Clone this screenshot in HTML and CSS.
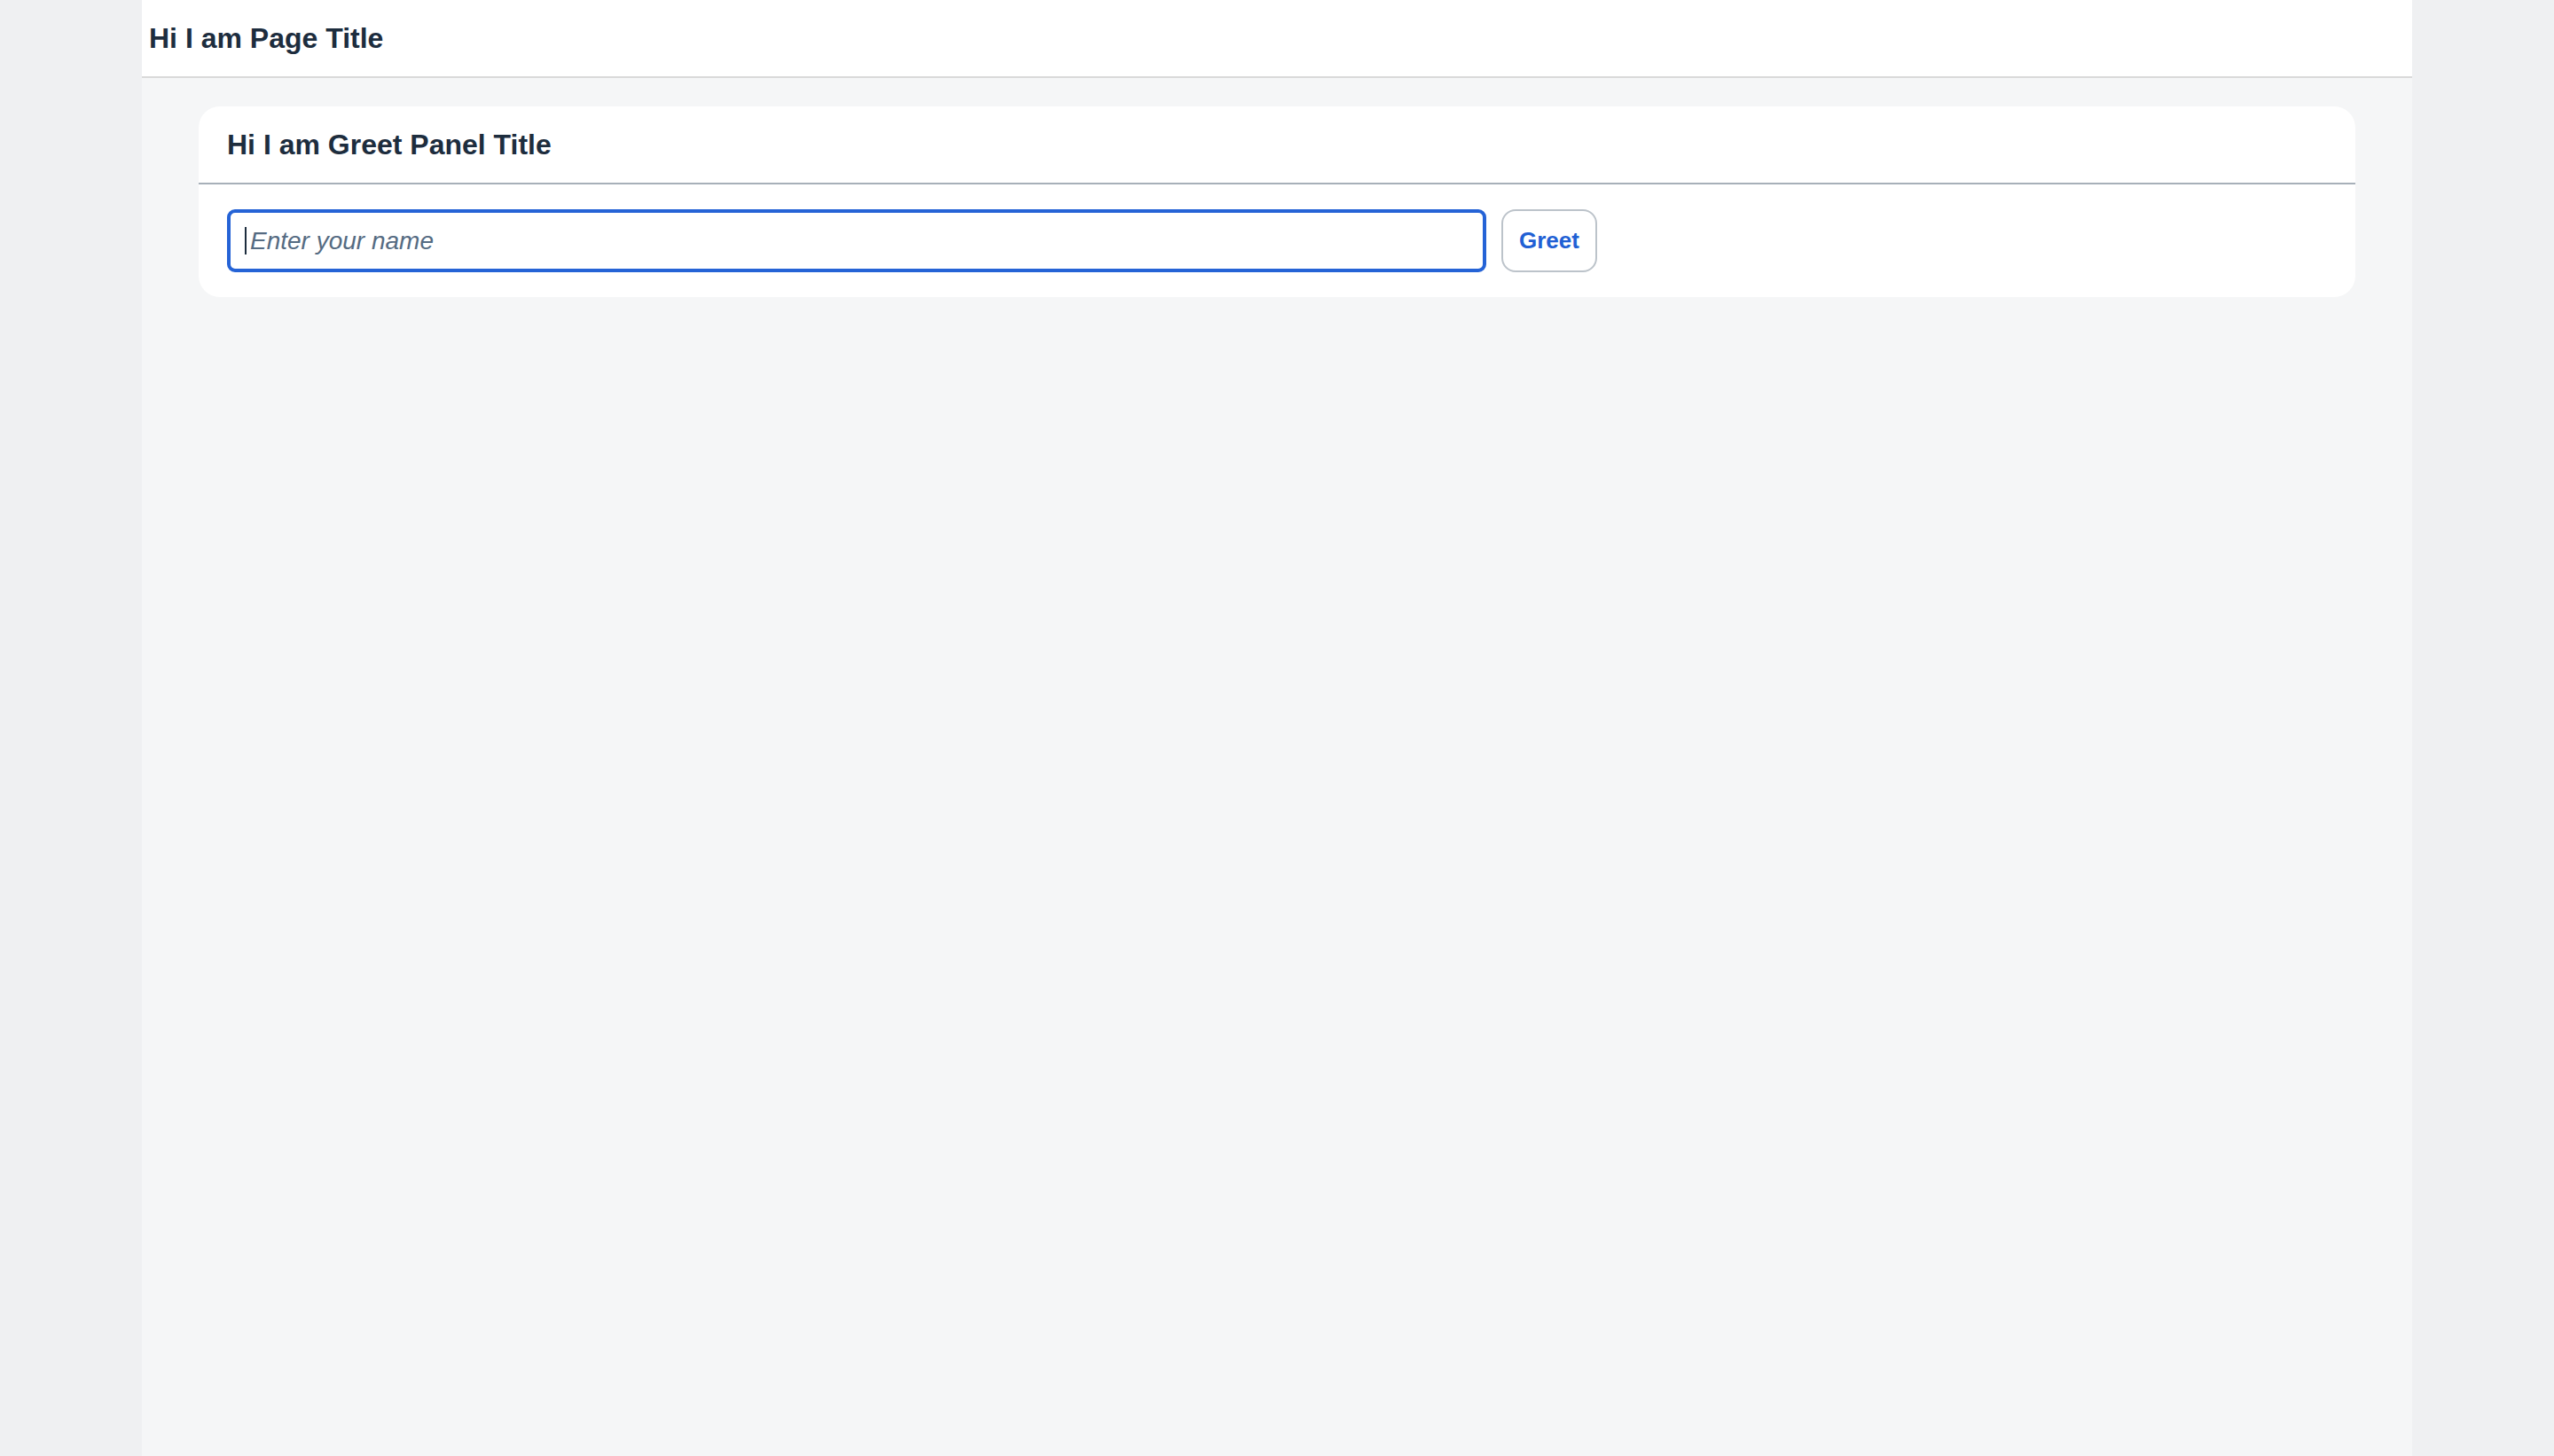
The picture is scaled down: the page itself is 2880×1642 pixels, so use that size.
FILE: index.html
```html
<!DOCTYPE html>
<html lang="en">
<head>
<meta charset="utf-8">
<title>Greet</title>
<link rel="stylesheet" href="styles.css">
</head>
<body>
<div class="shell">
  <header class="page-header">
    <h1 class="page-title">Hi I am Page Title</h1>
  </header>
  <main class="content">
    <section class="panel">
      <div class="panel-header">
        <h2 class="panel-title">Hi I am Greet Panel Title</h2>
      </div>
      <div class="panel-body">
        <div class="field" role="textbox" aria-label="Enter your name">
          <span class="caret"></span><span class="placeholder">Enter your name</span>
        </div>
        <button class="btn" type="button">Greet</button>
      </div>
    </section>
  </main>
</div>
</body>
</html>
```
FILE: styles.css
```css
html, body {
  margin: 0;
  padding: 0;
}
body {
  background: #eff0f2;
  font-family: "Liberation Sans", Arial, sans-serif;
  color: #1d2d3e;
}
.shell {
  width: 2560px;
  margin: 0 auto;
  min-height: 100vh;
  background: #f5f6f7;
}
.page-header {
  height: 86px;
  background: #ffffff;
  border-bottom: 2px solid #d9d9d9;
  display: flex;
  align-items: center;
  padding-left: 8px;
}
.page-title {
  margin: 0;
  font-size: 32px;
  font-weight: 700;
}
.content {
  padding: 32px 64px;
}
.panel {
  background: #ffffff;
  border-radius: 24px;
}
.panel-header {
  height: 86px;
  border-bottom: 2px solid #a7b0b9;
  display: flex;
  align-items: center;
  padding: 0 32px;
}
.panel-title {
  margin: 0;
  font-size: 32px;
  font-weight: 700;
}
.panel-body {
  display: flex;
  gap: 17px;
  padding: 28px 32px;
}
.field {
  box-sizing: border-box;
  width: 1420px;
  height: 71px;
  border: 4px solid #2563d6;
  border-radius: 9px;
  display: flex;
  align-items: center;
  padding-left: 16px;
  background: #ffffff;
}
.caret {
  width: 2px;
  height: 31px;
  background: #1d2d3e;
}
.placeholder {
  margin-left: 4px;
  font-size: 28px;
  font-style: italic;
  color: #556b82;
}
.btn {
  box-sizing: border-box;
  width: 108px;
  height: 71px;
  border: 2px solid #bcc3ca;
  border-radius: 16px;
  background: #ffffff;
  color: #2160d4;
  font-family: "Liberation Sans", Arial, sans-serif;
  font-size: 26px;
  font-weight: 700;
  padding: 0;
}
```
